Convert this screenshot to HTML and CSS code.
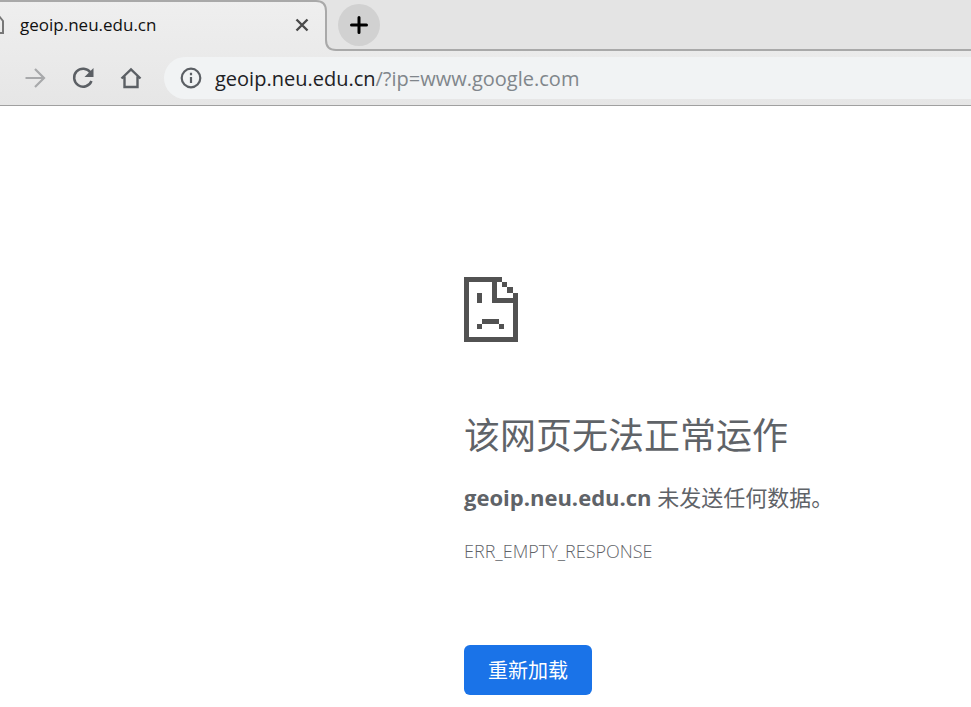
FILE: index.html
```html
<!DOCTYPE html>
<html lang="zh-CN">
<head>
    <meta charset="UTF-8">
    <meta name="viewport" content="width=device-width, initial-scale=1.0">
    <title>geoip.neu.edu.cn</title>
    <link rel="stylesheet" href="styles.css">
</head>
<body>
    <header class="browser">
        <div class="tabs">
            <div class="tab">
                <svg class="favicon" width="4" height="20" viewBox="0 0 4 20" fill="none" stroke="#777" stroke-width="2"><path d="M-4 1H-1L3 6V18H-4"/></svg>
                <span class="tab-title">geoip.neu.edu.cn</span>
                <button class="tab-close" type="button" aria-label="关闭">
                    <svg width="14" height="14" viewBox="0 0 14 14" stroke="#4a4a4a" stroke-width="2.4"><path d="M1.5 1.5L12.5 12.5M12.5 1.5L1.5 12.5"/></svg>
                </button>
            </div>
            <svg class="tab-edge" width="24" height="51" viewBox="0 0 24 51">
                <path d="M0 0H24V50H22Q12 50 12 40V11Q12 1 2 1H0Z" fill="#e4e4e4"/>
                <path d="M0 1H2Q12 1 12 11V40Q12 50 22 50H24" fill="none" stroke="#a9a9a9" stroke-width="2"/>
            </svg>
            <div class="strip">
                <button class="new-tab" type="button" aria-label="新标签页">
                    <svg width="18" height="18" viewBox="0 0 18 18" stroke="#000" stroke-width="3" stroke-linecap="round"><path d="M9 1.5V16.5M1.5 9H16.5"/></svg>
                </button>
            </div>
        </div>
        <div class="toolbar">
            <button class="tool" type="button" aria-label="前进" disabled>
                <svg width="24" height="24" viewBox="0 0 24 24" fill="none" stroke="#a8a9ab" stroke-width="2.2"><path d="M2.5 12H20M12 3L21 12L12 21"/></svg>
            </button>
            <button class="tool" type="button" aria-label="重新加载">
                <svg width="24" height="24" viewBox="0 0 24 24" fill="none" stroke="#5b5f64" stroke-width="2.5"><path d="M19.5 6.5A9 9 0 1 0 20.5 15"/><path d="M22.5 2V11H13.5Z" fill="#5b5f64" stroke="none"/></svg>
            </button>
            <button class="tool" type="button" aria-label="主页">
                <svg width="24" height="24" viewBox="0 0 24 24" fill="none" stroke="#5b5f64" stroke-width="2.4"><path d="M2.5 12.5L12 3.5L21.5 12.5M5.5 10.5V21H18.5V10.5"/></svg>
            </button>
            <div class="address">
                <svg width="22" height="22" viewBox="0 0 22 22" fill="none" stroke="#5b5f64" stroke-width="2.2"><circle cx="11" cy="11" r="9.3"/><path d="M11 10V16M11 5.8V8.2"/></svg>
                <a class="url" href="#">geoip.neu.edu.cn<span class="url-path">/?ip=www.google.com</span></a>
            </div>
        </div>
    </header>
    <main class="error">
        <svg class="sad-page" width="54" height="65" viewBox="0 0 54 65" fill="#525252" shape-rendering="crispEdges">
            <path d="M0 0H38V5H33V21H49V16H54V65H0ZM5 5V60H49V26H28V5Z" fill-rule="evenodd"/>
            <path d="M38 5H43V10H38ZM43 10H49V16H43ZM13 16H18V26H13ZM18 42H35V47H18ZM13 47H18V52H13ZM35 47H40V52H35Z"/>
        </svg>
        <h1>该网页无法正常运作</h1>
        <p class="summary"><strong>geoip.neu.edu.cn</strong> 未发送任何数据。</p>
        <p class="code">ERR_EMPTY_RESPONSE</p>
        <button class="reload" type="button">重新加载</button>
    </main>
</body>
</html>
```
FILE: styles.css
```css
* {
    box-sizing: border-box;
}
body {
    margin: 0;
    background: #fff;
    color: #5f6368;
    font-family: "Open Sans", "Noto Sans CJK SC", sans-serif;
}
button {
    padding: 0;
    border: 0;
    background: none;
    font-family: inherit;
}
svg {
    display: block;
    flex: none;
}
.browser {
    background: linear-gradient(#efefef, #e6e6e6);
    border-bottom: 1px solid #a0a0a0;
}
.tabs {
    display: flex;
    height: 51px;
}
.tab {
    display: flex;
    align-items: center;
    flex: none;
    width: 314px;
    padding: 0 5px 3px 0;
    border-top: 2px solid #a9a9a9;
}
.tab-title {
    flex: 1;
    padding-left: 16px;
    color: #111;
    font-size: 17px;
    line-height: 24px;
}
.tab-close {
    display: flex;
}
.strip {
    flex: 1;
    padding-top: 4px;
    border-bottom: 2px solid #a9a9a9;
    background: #e4e4e4;
}
.new-tab {
    display: flex;
    align-items: center;
    justify-content: center;
    width: 42px;
    height: 42px;
    border-radius: 50%;
    background: #d1d1d1;
}
.toolbar {
    display: flex;
    align-items: center;
    gap: 24px;
    height: 54px;
    padding-left: 23px;
}
.tool {
    display: flex;
    flex: none;
}
.address {
    display: flex;
    align-items: center;
    flex: 1;
    gap: 13px;
    height: 42px;
    margin-left: -3px;
    padding-left: 16px;
    border-radius: 21px 0 0 21px;
    background: #f1f3f4;
}
.url {
    padding-top: 2px;
    color: #202124;
    font-size: 20px;
    line-height: 28px;
    text-decoration: none;
    white-space: nowrap;
}
.url-path {
    color: #80868b;
}
.error {
    padding: 171px 24px 12px;
    margin-left: 440px;
}
h1 {
    margin: 66px 0 0;
    font-size: 36px;
    font-weight: 400;
    line-height: 56px;
}
.summary {
    margin: 17px 0 0;
    font-size: 22px;
    line-height: 32px;
}
.code {
    margin: 24px 0 0;
    font-size: 18px;
    font-weight: 300;
    line-height: 28px;
}
.reload {
    height: 50px;
    margin-top: 80px;
    padding: 0 24px 2px;
    border-radius: 6px;
    background: #1a73e8;
    color: #fff;
    font-size: 20px;
}
```
